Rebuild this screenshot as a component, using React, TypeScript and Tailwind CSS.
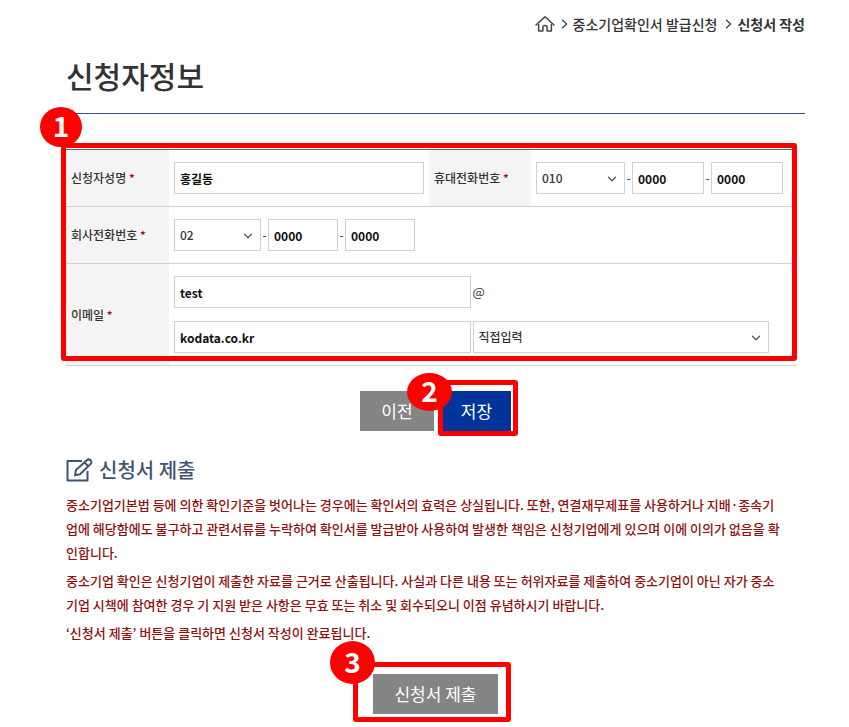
import { useState } from 'react';
import type { ReactNode } from 'react';
import { ChevronDown } from 'lucide-react';

const HomeIcon = () => (
    <svg width="20" height="18" viewBox="0 0 20 18" fill="none" stroke="#444" strokeWidth="1.5" strokeLinecap="round" strokeLinejoin="round" aria-hidden="true">
        <path d="M1 10 10 1.8l9 8.2" />
        <path d="M3.6 9.4V16h4.3v-3.4a2.1 2.1 0 0 1 4.2 0V16h4.3V9.4" />
    </svg>
);

const Arrow = ({ className }: { className: string }) => (
    <svg width="7" height="10" viewBox="0 0 7 10" fill="none" stroke="#444" strokeWidth="1.4" className={className} aria-hidden="true">
        <path d="M1 .8 5.6 5 1 9.2" />
    </svg>
);

const EditIcon = () => (
    <svg width="28" height="24" viewBox="0 0 28 24" fill="none" stroke="#3f5473" strokeWidth="2" strokeLinejoin="round" aria-hidden="true">
        <path d="M16 3H1.5v19.5h20V13" />
        <path d="M9 17.4l1-5.4L20.8 2.2c1.2-1.1 2.6-1 3.7.1s1.1 2.7 0 3.8L14 16.2z" />
        <path d="M18.4 4.4l3.9 3.9" />
    </svg>
);

// red numbered marker that sits over the corner of a highlighted area
const Marker = ({ no, className }: { no: number; className: string }) => (
    <span className={`absolute flex items-center justify-center rounded-[50%] bg-[#fe0000] pb-1 text-[28px] leading-none font-bold text-white ${className}`}>{no}</span>
);

const Frame = ({ className }: { className: string }) => (
    <span aria-hidden="true" className={`pointer-events-none absolute rounded-[3px] border-[5px] border-[#fe0000] ${className}`} />
);

const Label = ({ htmlFor, children }: { htmlFor: string; children: ReactNode }) => (
    <th scope="row" className="border-b border-[#cfd1d8] bg-[#f4f4f4] px-[5px] text-left font-medium">
        <label htmlFor={htmlFor}>{children} <span className="text-[#a80000]">*</span></label>
    </th>
);

const TextBox = ({ id, label, value, className }: { id: string; label?: string; value: string; className: string }) => {
    const [text, setText] = useState(value);
    return (
        <input
            id={id}
            type="text"
            aria-label={label}
            value={text}
            onChange={(e) => setText(e.target.value)}
            className={`h-8 min-w-0 border border-[#cfd1d8] bg-white px-[5px] font-bold text-[#111] outline-none ${className}`}
        />
    );
};

const SelectBox = ({ id, label, options, className }: { id: string; label?: string; options: string[]; className: string }) => (
    <div className={`relative min-w-0 ${className}`}>
        <select id={id} aria-label={label} className="block h-8 w-full appearance-none border border-[#cfd1d8] bg-white px-[5px] font-medium text-[#333] outline-none">
            {options.map((o) => <option key={o}>{o}</option>)}
        </select>
        <ChevronDown size={14} strokeWidth={2.2} className="pointer-events-none absolute top-[10px] right-[6px] text-[#555]" />
    </div>
);

export default function App() {
    return (
        <div className="bg-white pr-11 pb-3 pl-[66px] font-['Noto_Sans_CJK_KR',sans-serif] text-[#333]">
            <nav className="flex items-center justify-end pt-3 text-[14px] leading-6">
                <HomeIcon />
                <Arrow className="mr-[5px] ml-[6px]" />
                <a href="#apply" className="font-medium">중소기업확인서 발급신청</a>
                <Arrow className="mr-[5px] ml-2" />
                <strong>신청서 작성</strong>
            </nav>

            <h1 className="mt-[17px] border-b border-[#3c4f88] pb-4 text-[30px] leading-[44px] font-medium">신청자정보</h1>

            <form onSubmit={(e) => e.preventDefault()}>
                <div className="relative mt-[35px] mr-2">
                    <table className="w-full table-fixed border-separate border-spacing-0 border-t border-[#666] text-[12px] leading-5">
                        <colgroup>
                            <col className="w-[103px]" />
                            <col className="w-[260px]" />
                            <col className="w-[102px]" />
                            <col />
                        </colgroup>
                        <tbody>
                            <tr>
                                <Label htmlFor="name">신청자성명</Label>
                                <td className="border-b border-[#cfd1d8] px-[5px] py-3">
                                    <TextBox id="name" value="홍길동" className="block w-full" />
                                </td>
                                <Label htmlFor="mobile1">휴대전화번호</Label>
                                <td className="border-b border-[#cfd1d8] py-3 pr-[14px] pl-[5px]">
                                    <div className="flex items-center">
                                        <SelectBox id="mobile1" options={['010', '011', '016', '017', '019']} className="w-[89px]" />
                                        <span className="w-[7px] text-center">-</span>
                                        <TextBox id="mobile2" label="휴대전화번호 가운데 자리" value="0000" className="w-0 flex-1" />
                                        <span className="w-[7px] text-center">-</span>
                                        <TextBox id="mobile3" label="휴대전화번호 끝자리" value="0000" className="w-0 flex-1" />
                                    </div>
                                </td>
                            </tr>
                            <tr>
                                <Label htmlFor="tel1">회사전화번호</Label>
                                <td colSpan={3} className="border-b border-[#cfd1d8] px-[5px] py-3">
                                    <div className="flex items-center">
                                        <SelectBox id="tel1" options={['02', '031', '032', '051']} className="w-[87px]" />
                                        <span className="w-[7px] text-center">-</span>
                                        <TextBox id="tel2" label="회사전화번호 가운데 자리" value="0000" className="w-[70px]" />
                                        <span className="w-[7px] text-center">-</span>
                                        <TextBox id="tel3" label="회사전화번호 끝자리" value="0000" className="w-[70px]" />
                                    </div>
                                </td>
                            </tr>
                            <tr>
                                <Label htmlFor="email">이메일</Label>
                                <td colSpan={3} className="border-b border-[#cfd1d8] py-3 pr-7 pl-[5px]">
                                    <div className="grid grid-cols-2 items-center gap-x-[2px] gap-y-[13px]">
                                        <TextBox id="email" value="test" className="w-full" />
                                        <span className="text-[13px]">@</span>
                                        <TextBox id="domain" label="이메일 도메인" value="kodata.co.kr" className="w-full" />
                                        <SelectBox id="provider" label="이메일 도메인 선택" options={['직접입력', 'naver.com', 'gmail.com']} className="w-full" />
                                    </div>
                                </td>
                            </tr>
                        </tbody>
                    </table>
                    <Frame className="-top-[6px] right-0 bottom-[5px] -left-[5px]" />
                    <Marker no={1} className="-top-[42px] -left-[26px] h-10 w-[42px]" />
                </div>

                <div className="mt-[25px] flex justify-center gap-2 text-[17px] leading-[39px] text-white">
                    <button type="button" className="w-[74px] bg-[#858585] pb-px">이전</button>
                    <div className="relative">
                        <button type="submit" className="w-[69px] bg-[#00349a] pb-px">저장</button>
                        <Frame className="-top-[11px] -right-[7px] -bottom-[5px] -left-[4px]" />
                        <Marker no={2} className="-top-[18px] -left-[35px] h-[38px] w-[45px]" />
                    </div>
                </div>
            </form>

            <section>
                <h2 className="mt-[25px] flex items-center gap-[5px] text-[20px] leading-7 font-medium text-[#3f5473]">
                    <EditIcon />
                    신청서 제출
                </h2>
                <div className="mt-[9px] space-y-1 text-[13px] leading-6 font-medium text-[#8f1010]">
                    <p>
                        중소기업기본법 등에 의한 확인기준을 벗어나는 경우에는 확인서의 효력은 상실됩니다. 또한, 연결재무제표를 사용하거나 지배·종속기<br />
                        업에 해당함에도 불구하고 관련서류를 누락하여 확인서를 발급받아 사용하여 발생한 책임은 신청기업에게 있으며 이에 이의가 없음을 확<br />
                        인합니다.
                    </p>
                    <p>
                        중소기업 확인은 신청기업이 제출한 자료를 근거로 산출됩니다. 사실과 다른 내용 또는 허위자료를 제출하여 중소기업이 아닌 자가 중소<br />
                        기업 시책에 참여한 경우 기 지원 받은 사항은 무효 또는 취소 및 회수되오니 이점 유념하시기 바랍니다.
                    </p>
                    <p>‘신청서 제출’ 버튼을 클릭하면 신청서 작성이 완료됩니다.</p>
                </div>
                <div className="mt-[29px] flex justify-center">
                    <div className="relative">
                        <button type="button" className="w-[125px] bg-[#858585] text-[17px] leading-10 text-white">신청서 제출</button>
                        <Frame className="-top-[12px] -right-[13px] -bottom-2 -left-5" />
                        <Marker no={3} className="-top-[33px] -left-[43px] h-[43px] w-[45px]" />
                    </div>
                </div>
            </section>
        </div>
    );
}
